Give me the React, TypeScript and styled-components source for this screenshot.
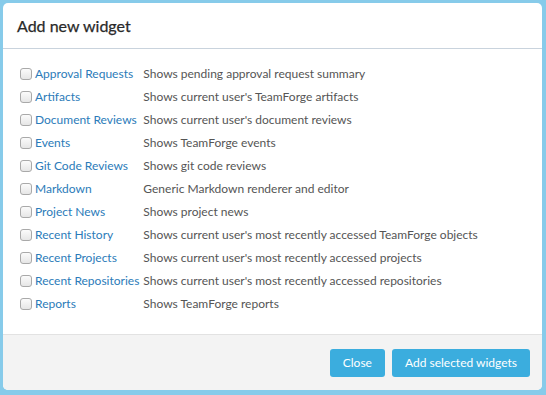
import { Fragment } from 'react';
import styled, { createGlobalStyle } from 'styled-components';

const GlobalStyle = createGlobalStyle`
    html, body {
        margin: 0;
        padding: 0;
        background: #87cbea;
    }
    body {
        font-family: Lato, 'Noto Sans', sans-serif;
    }
`
const Backdrop = styled.div`
    width: 546px;
    height: 395px;
    box-sizing: border-box;
    padding: 3px 4px 5px 3px;
    background: #87cbea;
`
const Modal = styled.div`
    height: 100%;
    display: flex;
    flex-direction: column;
    background: #fff;
    border-radius: 5px;
    overflow: hidden;
`
const Header = styled.div`
    height: 45px;
    display: flex;
    align-items: center;
    padding: 0 14px;
    border-bottom: 1px solid #c9d3dd;
`
const Title = styled.h4`
    margin: 0;
    font-size: 16px;
    font-weight: 400;
    color: #2a2a2a;
    -webkit-text-stroke: 0.25px #2a2a2a;
`
const Body = styled.div`
    flex: 1;
    padding: 13px 17px 0;
`
const WidgetList = styled.div`
    display: grid;
    grid-template-columns: auto auto 1fr;
    grid-auto-rows: 23px;
    align-items: center;
`
const Check = styled.input`
    appearance: none;
    width: 12px;
    height: 12px;
    margin: 0 3px 0 0;
    box-sizing: border-box;
    border: 1px solid #a9a9a9;
    border-radius: 3px;
    background: linear-gradient(#fbfbfb, #e6e6e6);
`
const Name = styled.a`
    font-size: 12px;
    color: #2b7bb9;
    text-decoration: none;
    padding-right: 4px;
    white-space: nowrap;
`
const Description = styled.span`
    font-size: 12px;
    color: #555;
    white-space: nowrap;
`
const Footer = styled.div`
    height: 55px;
    display: flex;
    align-items: center;
    justify-content: flex-end;
    gap: 7px;
    padding: 0 12px;
    background: #f3f3f3;
    border-top: 1px solid #e2e2e2;
`
const Button = styled.button`
    height: 28px;
    padding: 0 13px;
    border: none;
    border-radius: 3px;
    background: #3badde;
    color: #fff;
    font-family: Lato, 'Noto Sans', sans-serif;
    font-size: 12px;
`

const widgets = [
    ['Approval Requests', 'Shows pending approval request summary'],
    ['Artifacts', "Shows current user's TeamForge artifacts"],
    ['Document Reviews', "Shows current user's document reviews"],
    ['Events', 'Shows TeamForge events'],
    ['Git Code Reviews', 'Shows git code reviews'],
    ['Markdown', 'Generic Markdown renderer and editor'],
    ['Project News', 'Shows project news'],
    ['Recent History', "Shows current user's most recently accessed TeamForge objects"],
    ['Recent Projects', "Shows current user's most recently accessed projects"],
    ['Recent Repositories', "Shows current user's most recently accessed repositories"],
    ['Reports', 'Shows TeamForge reports'],
]

function App() {
    return (
        <Backdrop>
            <GlobalStyle />
            <Modal>
                <Header>
                    <Title>Add new widget</Title>
                </Header>
                <Body>
                    <WidgetList>
                        {
                            widgets.map(([name, desc]) => (
                                <Fragment key={name}>
                                    <Check type="checkbox" />
                                    <Name href="#">{name}</Name>
                                    <Description>{desc}</Description>
                                </Fragment>
                            ))
                        }
                    </WidgetList>
                </Body>
                <Footer>
                    <Button>Close</Button>
                    <Button>Add selected widgets</Button>
                </Footer>
            </Modal>
        </Backdrop>
    )
}

export default App;
